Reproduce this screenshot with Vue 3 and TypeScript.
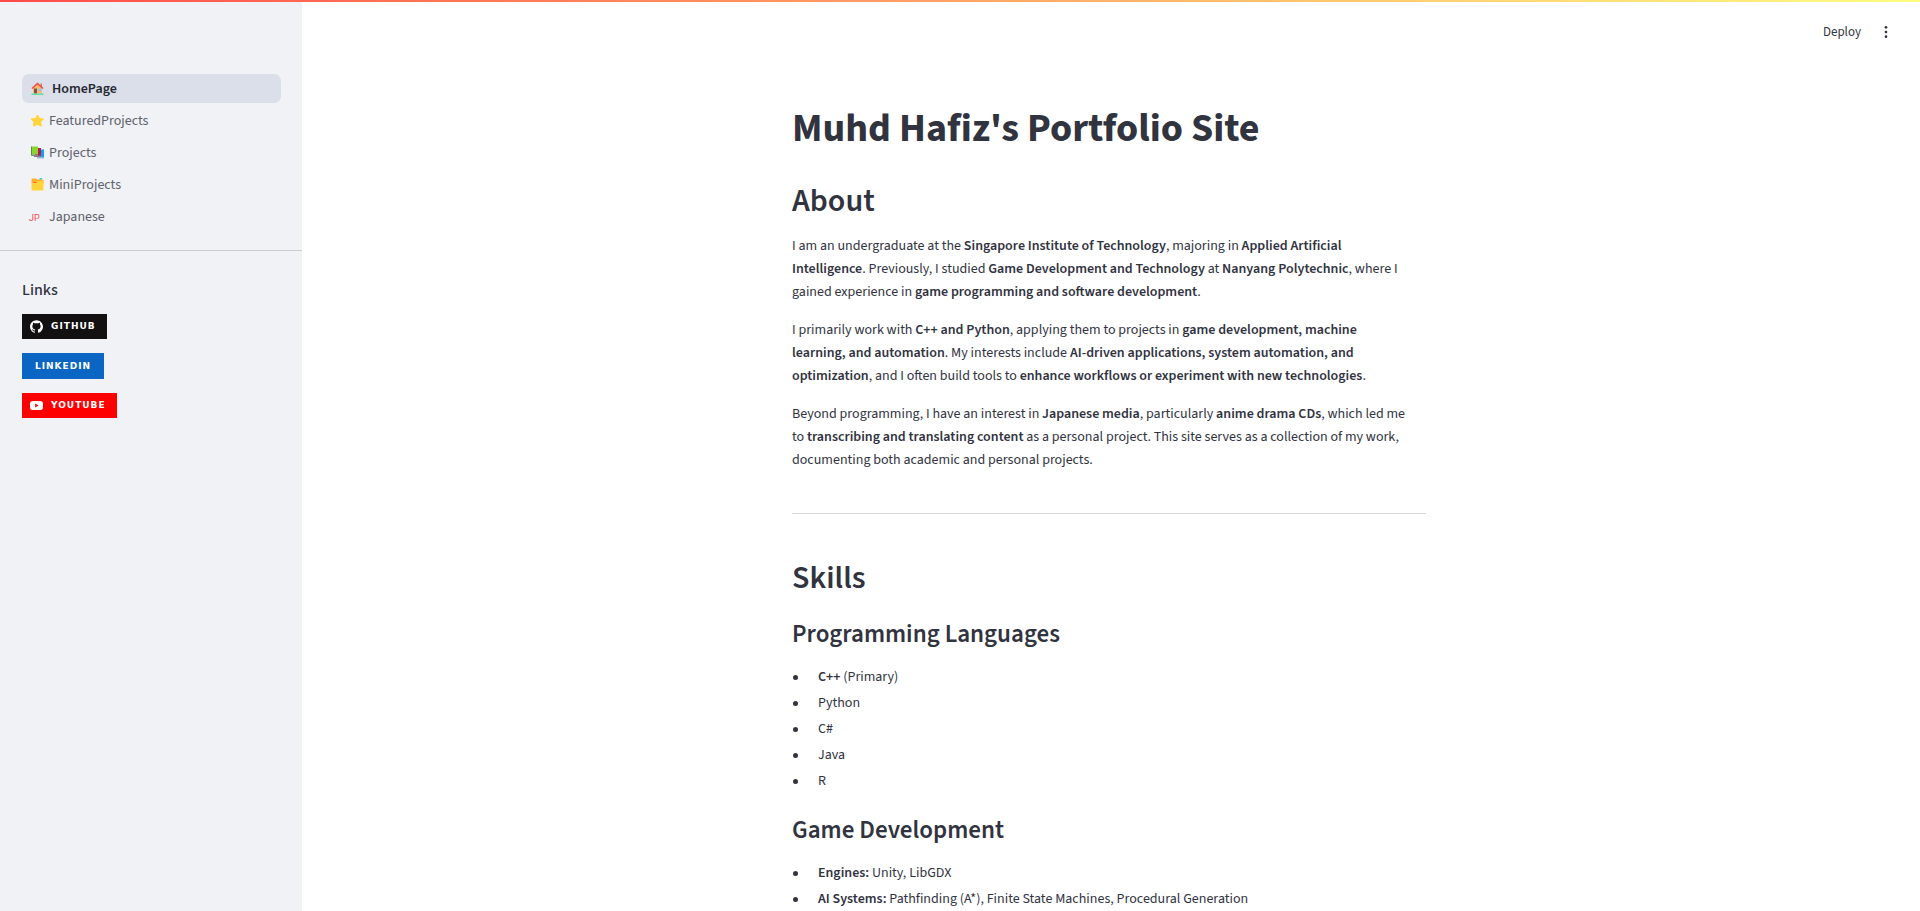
<script setup lang="ts">
type Icon = 'house' | 'star' | 'books' | 'folder' | 'jp'
interface Page { label: string; icon: Icon }
interface Badge { label: string; kind: 'github' | 'linkedin' | 'youtube' }
interface Skill { strong?: string; text: string }
interface SkillGroup { title: string; items: Skill[] }

const pages: Page[] = [
  { label: 'HomePage', icon: 'house' },
  { label: 'FeaturedProjects', icon: 'star' },
  { label: 'Projects', icon: 'books' },
  { label: 'MiniProjects', icon: 'folder' },
  { label: 'Japanese', icon: 'jp' },
]

const badges: Badge[] = [
  { label: 'GITHUB', kind: 'github' },
  { label: 'LINKEDIN', kind: 'linkedin' },
  { label: 'YOUTUBE', kind: 'youtube' },
]

const skills: SkillGroup[] = [
  {
    title: 'Programming Languages',
    items: [
      { strong: 'C++', text: ' (Primary)' },
      { text: 'Python' },
      { text: 'C#' },
      { text: 'Java' },
      { text: 'R' },
    ],
  },
  {
    title: 'Game Development',
    items: [
      { strong: 'Engines:', text: ' Unity, LibGDX' },
      { strong: 'AI Systems:', text: ' Pathfinding (A*), Finite State Machines, Procedural Generation' },
    ],
  },
]
</script>

<template>
  <div class="app">
    <div class="decoration"></div>
    <aside class="sidebar">
      <nav class="nav" aria-label="Pages">
        <a
          v-for="(page, i) in pages"
          :key="page.label"
          href="#"
          class="nav-link"
          :class="{ active: i === 0 }"
          :aria-current="i === 0 ? 'page' : undefined"
        >
          <span v-if="page.icon === 'jp'" class="flag">JP</span>
          <svg v-else class="emoji" viewBox="0 0 26 26" aria-hidden="true">
            <template v-if="page.icon === 'house'">
              <path d="M19 3h3v8h-3z" fill="#c2805a" />
              <path d="M4 12 13 3l9 9v11H4z" fill="#fbb979" />
              <path d="M1 12 13 1l12 11-2 2L13 5 3 14z" fill="#f04a3e" />
              <path d="M6 13h6v10H6z" fill="#85513c" />
              <path d="M15 13h5v5h-5z" fill="#7ccbf4" />
              <path d="M1 23h24v3H1z" fill="#62dda0" />
            </template>
            <path
              v-else-if="page.icon === 'star'"
              d="m13 2 4 7 8 1-6 6 2 8-8-3-8 3 1-8-6-6 9-1z"
              fill="#ffd43a"
              stroke="#ffd43a"
              stroke-width="2"
              stroke-linejoin="round"
            />
            <template v-else-if="page.icon === 'books'">
              <path d="M15 7h11v15H15z" fill="#08a4f1" />
              <path d="M12 22h14v3H12z" fill="#92bbd8" />
              <path d="M8 4h12v16H8z" fill="#c2124f" />
              <path d="M6 19h14v3H6z" fill="#a06e87" />
              <path d="M0 1h2v18H0z" fill="#5b8c32" />
              <path d="M2 1h12v16H2z" fill="#88d52f" />
              <path d="M1 17h13v3H1z" fill="#79937a" />
            </template>
            <template v-else>
              <path d="M1 3q0-2 2-2h7l3 2h10q2 0 2 2v6H1z" fill="#ffae29" />
              <path d="M18 0h4v3h-6z" fill="#39cdbd" />
              <path d="M1 11q5 0 8-3l14-3q2 0 2 2v16q0 2-2 2H3q-2 0-2-2z" fill="#ffd43b" />
              <path d="M5 8h8l-3 2H4z" fill="#ff6336" />
            </template>
          </svg>
          <span class="label">{{ page.label }}</span>
        </a>
      </nav>
      <section class="links">
        <h3>Links</h3>
        <a v-for="badge in badges" :key="badge.kind" href="#" class="badge" :class="badge.kind">
          <svg v-if="badge.kind === 'github'" viewBox="0 0 24 24" aria-hidden="true">
            <path d="M12 .297c-6.63 0-12 5.373-12 12 0 5.303 3.438 9.8 8.205 11.385.6.113.82-.258.82-.577 0-.285-.01-1.04-.015-2.04-3.338.724-4.042-1.61-4.042-1.61C4.422 18.07 3.633 17.7 3.633 17.7c-1.087-.744.084-.729.084-.729 1.205.084 1.838 1.236 1.838 1.236 1.07 1.835 2.809 1.305 3.495.998.108-.776.417-1.305.76-1.605-2.665-.3-5.466-1.332-5.466-5.93 0-1.31.465-2.38 1.235-3.22-.135-.303-.54-1.523.105-3.176 0 0 1.005-.322 3.3 1.23.96-.267 1.98-.399 3-.405 1.02.006 2.04.138 3 .405 2.28-1.552 3.285-1.23 3.285-1.23.645 1.653.24 2.873.12 3.176.765.84 1.23 1.91 1.23 3.22 0 4.61-2.805 5.625-5.475 5.92.42.36.81 1.096.81 2.22 0 1.606-.015 2.896-.015 3.286 0 .315.21.69.825.57C20.565 22.092 24 17.592 24 12.297c0-6.627-5.373-12-12-12" />
          </svg>
          <svg v-else-if="badge.kind === 'youtube'" viewBox="0 0 24 24" aria-hidden="true">
            <path d="M23.498 6.186a3.016 3.016 0 0 0-2.122-2.136C19.505 3.545 12 3.545 12 3.545s-7.505 0-9.377.505A3.017 3.017 0 0 0 .502 6.186C0 8.07 0 12 0 12s0 3.93.502 5.814a3.016 3.016 0 0 0 2.122 2.136c1.871.505 9.376.505 9.376.505s7.505 0 9.377-.505a3.015 3.015 0 0 0 2.122-2.136C24 15.93 24 12 24 12s0-3.93-.502-5.814zM9.545 15.568V8.432L15.818 12l-6.273 3.568z" />
          </svg>
          <span>{{ badge.label }}</span>
        </a>
      </section>
    </aside>

    <div class="page">
      <header class="toolbar">
        <button type="button" class="deploy">Deploy</button>
        <button type="button" class="menu" aria-label="Main menu">
          <svg viewBox="0 0 24 24" aria-hidden="true">
            <circle cx="12" cy="5" r="2" /><circle cx="12" cy="12" r="2" /><circle cx="12" cy="19" r="2" />
          </svg>
        </button>
      </header>
      <main class="content">
        <h1>Muhd Hafiz's Portfolio Site</h1>
        <h2>About</h2>
        <p>
          I am an undergraduate at the <strong>Singapore Institute of Technology</strong>, majoring in
          <strong>Applied Artificial Intelligence</strong>. Previously, I studied
          <strong>Game Development and Technology</strong> at <strong>Nanyang Polytechnic</strong>, where I
          gained experience in <strong>game programming and software development</strong>.
        </p>
        <p>
          I primarily work with <strong>C++ and Python</strong>, applying them to projects in
          <strong>game development, machine learning, and automation</strong>. My interests include
          <strong>AI-driven applications, system automation, and optimization</strong>, and I often build tools to
          <strong>enhance workflows or experiment with new technologies</strong>.
        </p>
        <p>
          Beyond programming, I have an interest in <strong>Japanese media</strong>, particularly
          <strong>anime drama CDs</strong>, which led me to
          <strong>transcribing and translating content</strong> as a personal project. This site serves as a
          collection of my work, documenting both academic and personal projects.
        </p>
        <hr />
        <h2>Skills</h2>
        <section v-for="group in skills" :key="group.title" class="skill-group">
          <h3>{{ group.title }}</h3>
          <ul>
            <li v-for="item in group.items" :key="item.text">
              <span><strong v-if="item.strong">{{ item.strong }}</strong>{{ item.text }}</span>
            </li>
          </ul>
        </section>
      </main>
    </div>
  </div>
</template>

<style>
body {
  margin: 0;
  overflow: hidden;
}
</style>

<style scoped>
.app {
  display: flex;
  position: relative;
  height: 100vh;
  overflow: hidden;
  background: #fff;
  color: #31333f;
  font-family: "Source Sans 3", "Source Sans Pro", "Noto Sans CJK JP", "Noto Sans", sans-serif;
  font-size: 14px;
  line-height: 23px;
}

.decoration {
  position: absolute;
  inset: 0 0 auto;
  height: 2px;
  background: linear-gradient(90deg, #ff4b4b, #fffd80);
  z-index: 2;
}

.sidebar {
  flex: 0 0 302px;
  box-sizing: border-box;
  padding-top: 74px;
  background: #f0f2f6;
}

.nav {
  display: flex;
  flex-direction: column;
  gap: 3px;
  padding: 0 21px 19px 22px;
  border-bottom: 1px solid #cbccd2;
}

.nav-link {
  display: flex;
  align-items: center;
  gap: 5px;
  height: 29px;
  padding: 0 9px;
  border-radius: 7px;
  color: #5f616b;
  text-decoration: none;
}

.nav-link.active {
  gap: 8px;
  background: #dadfe9;
  color: #262730;
  font-weight: 600;
}

.emoji {
  flex: none;
  width: 13px;
  height: 13px;
}

.label {
  padding-top: 2px;
}

.flag {
  flex: none;
  width: 15px;
  margin-left: -2px;
  padding-top: 4px;
  color: #ff4b55;
  font-family: Roboto, "Noto Sans", sans-serif;
  font-size: 9px;
  line-height: 15px;
}

.links {
  display: flex;
  flex-direction: column;
  align-items: flex-start;
  gap: 14px;
  padding: 29px 22px;
}

.links h3 {
  margin: 0;
  font-size: 16px;
  font-weight: 500;
  line-height: 20px;
}

.badge {
  display: flex;
  align-items: center;
  gap: 8px;
  height: 25px;
  padding: 0 11px 0 8px;
  color: #fff;
  font-family: Verdana, "DejaVu Sans", sans-serif;
  font-size: 9px;
  font-weight: 700;
  letter-spacing: 1px;
  text-decoration: none;
}

.badge svg {
  width: 13px;
  height: 13px;
  fill: #fff;
}

.github {
  background: #121011;
}

.linkedin {
  height: 26px;
  padding: 0 13px;
  background: #0a66c2;
}

.youtube {
  background: #f00;
}

.page {
  flex: 1;
  min-width: 0;
  padding-right: 4px;
}

.toolbar {
  display: flex;
  align-items: center;
  justify-content: flex-end;
  gap: 17px;
  height: 54px;
  padding: 10px 22px 0 0;
  box-sizing: border-box;
}

.toolbar button {
  display: flex;
  padding: 0;
  border: 0;
  background: none;
  color: inherit;
  font: inherit;
}

.toolbar .deploy {
  font-size: 13px;
}

.menu svg {
  width: 16px;
  height: 16px;
  fill: currentColor;
}

.content {
  max-width: 634px;
  margin: 0 auto;
  padding: 33px 14px 0;
}

h1,
h2,
.skill-group h3 {
  margin: 0;
}

h1 {
  padding: 18px 0 14px;
  font-size: 40px;
  font-weight: 700;
  line-height: 48px;
}

h2 {
  padding: 15px 0 14px;
  font-size: 32px;
  font-weight: 600;
  line-height: 39px;
}

.skill-group h3 {
  padding: 7px 0 14px;
  font-size: 25px;
  font-weight: 600;
  line-height: 30px;
}

p {
  max-width: 616px;
  margin: 0 0 15px;
}

strong {
  font-weight: 600;
}

hr {
  height: 0;
  margin: 41px 0 30px;
  border: 0;
  border-top: 1px solid #d6d6d9;
}

ul {
  display: flex;
  flex-direction: column;
  gap: 3px;
  margin: 0 0 15px;
  padding: 3px 0 0;
  list-style: none;
}

li {
  display: flex;
  align-items: center;
  gap: 20px;
}

li::before {
  content: "";
  flex: none;
  width: 5px;
  height: 5px;
  margin-left: 1px;
  border-radius: 50%;
  background: #31333f;
}
</style>
